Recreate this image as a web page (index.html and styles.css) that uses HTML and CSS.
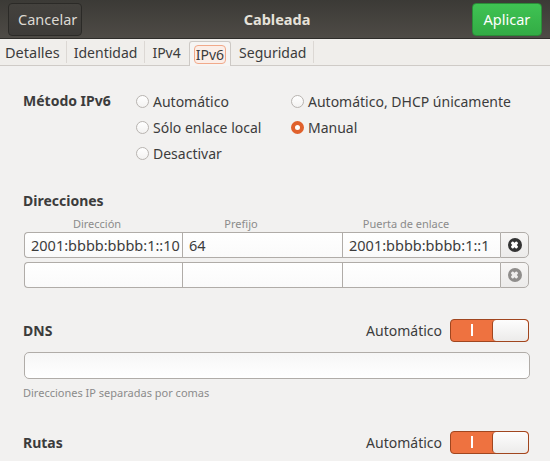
FILE: index.html
```html
<!DOCTYPE html>
<html lang="es">
<head>
<meta charset="utf-8">
<link rel="stylesheet" href="styles.css">
</head>
<body>
<div class="win">
  <header class="hb">
    <button class="btn cancel">Cancelar</button>
    <div class="title">Cableada</div>
    <button class="btn apply">Aplicar</button>
  </header>
  <nav class="tabs">
    <div class="tab">Detalles</div>
    <div class="sep"></div>
    <div class="tab">Identidad</div>
    <div class="sep"></div>
    <div class="tab">IPv4</div>
    <div class="tab active"><span class="focus">IPv6</span></div>
    <div class="tab">Seguridad</div>
    <div class="sep"></div>
  </nav>
  <main class="content">
    <div class="method">
      <div class="mlabel">Método IPv6</div>
      <div class="radios">
        <label class="radio"><span class="dot"></span>Automático</label>
        <label class="radio"><span class="dot"></span>Automático, DHCP únicamente</label>
        <label class="radio"><span class="dot"></span>Sólo enlace local</label>
        <label class="radio"><span class="dot on"></span>Manual</label>
        <label class="radio"><span class="dot"></span>Desactivar</label>
      </div>
    </div>

    <h3 class="heading dir">Direcciones</h3>
    <div class="cols">
      <span>Dirección</span><span>Prefijo</span><span>Puerta de enlace</span>
    </div>
    <div class="arow">
      <div class="f f1">2001:bbbb:bbbb:1::10</div>
      <div class="f f2">64</div>
      <div class="f f3">2001:bbbb:bbbb:1::1</div>
      <div class="xbtn"><span class="xi"></span></div>
    </div>
    <div class="arow">
      <div class="f f1"></div>
      <div class="f f2"></div>
      <div class="f f3"></div>
      <div class="xbtn"><span class="xi dis"></span></div>
    </div>

    <div class="srow dns">
      <h3 class="heading">DNS</h3>
      <div class="auto">Automático <span class="switch"><span class="on-part"><i></i></span><span class="knob"></span></span></div>
    </div>
    <div class="entry"></div>
    <div class="help">Direcciones IP separadas por comas</div>

    <div class="srow rutas">
      <h3 class="heading">Rutas</h3>
      <div class="auto">Automático <span class="switch"><span class="on-part"><i></i></span><span class="knob"></span></span></div>
    </div>
  </main>
</div>
</body>
</html>
```
FILE: styles.css
```css
* { box-sizing: border-box; }
html, body { margin: 0; padding: 0; }
body {
  width: 550px; height: 461px; overflow: hidden;
  background: #f2f1f0;
  font-family: "Noto Sans", "DejaVu Sans", sans-serif;
  font-size: 14px;
  color: #3c3c3c;
}
.win { width: 550px; height: 461px; }

.hb {
  height: 39px;
  display: flex; align-items: center; justify-content: space-between;
  padding: 0 8px;
  background: linear-gradient(#3b3a36, #4e4b46);
  border-bottom: 1px solid #2e2d2a;
}
.btn {
  height: 33px; border-radius: 4px;
  font-family: inherit; font-size: 14.5px;
  padding: 0 9px;
}
.cancel {
  width: 74px;
  background: linear-gradient(#44423e, #3d3b38);
  border: 1px solid #2b2a27;
  color: #dcd9d3;
}
.apply {
  width: 70px;
  background: linear-gradient(#3fc353, #33ac45);
  border: 1px solid #2a8c37;
  color: #ffffff;
}
.title { color: #e6e2da; font-weight: bold; font-size: 14.5px; }

.tabs {
  height: 27px;
  display: flex; align-items: stretch;
  border-bottom: 1px solid #cfcbc7;
  background: #f0eeeb;
}
.tab {
  display: flex; align-items: center;
  padding: 0 7px;
  color: #3c3c3c;
}
.tab:first-child { padding-left: 5px; padding-right: 6px; font-size: 14.5px; }
.sep { width: 1px; margin: 2px 0; background: #dcd8d4; }
.tab.active {
  margin: 2px 1px -1px 1px;
  padding: 0 4px;
  background: #f6f5f4;
  border: 1px solid #cdc9c5;
  border-bottom: none;
  border-radius: 3px 3px 0 0;
}
.focus {
  border: 1px solid #f1a98a;
  background: #fbeee8;
  border-radius: 4px;
  padding: 0 1px;
  line-height: 17px;
}

.content { padding: 0 21px 0 23px; }

.method { display: flex; margin-top: 22px; }
.mlabel { width: 113px; font-weight: bold; height: 26px; line-height: 26px; }
.radios { display: grid; grid-template-columns: 155px auto; grid-auto-rows: 26px; }
.radio { display: flex; align-items: center; }
.dot {
  width: 13px; height: 13px; border-radius: 50%;
  border: 1px solid #b8b4b0;
  background: linear-gradient(#ffffff, #f3f2f1);
  margin-right: 4px;
}
.dot.on {
  background: #ffffff;
  border: 4px solid #e0612c;
}

.heading { margin: 0; font-size: 14px; font-weight: bold; }
.dir { margin-top: 25px; height: 20px; line-height: 20px; }
.cols {
  display: grid; grid-template-columns: 146px 142px 188px;
  margin-left: 1px; height: 16px; line-height: 16px; margin-top: 5px;
  font-size: 11px; color: #8b8b8b; text-align: center;
}
.arow {
  display: flex; height: 26px; margin-left: 1px; margin-bottom: 4px; width: 505px;
}
.f {
  border: 1px solid #b0aca8;
  border-right: none;
  background: linear-gradient(#ffffff, #fafafa);
  padding-left: 6px; line-height: 24px; font-size: 14.5px;
  white-space: nowrap; overflow: hidden;
}
.f1 { width: 158px; border-radius: 4px 0 0 4px; }
.f2 { width: 160px; }
.f3 { width: 158px; }
.xbtn {
  width: 29px;
  border: 1px solid #b0aca8;
  border-radius: 0 5px 5px 0;
  background: linear-gradient(#f7f6f5, #ecebea);
  display: flex; align-items: center; justify-content: center;
}
.xi {
  width: 14px; height: 14px; border-radius: 50%;
  background: #333333; position: relative;
}
.xi.dis { background: #8f8d8b; }
.xi::before, .xi::after {
  content: ""; position: absolute; left: 5.5px; top: 3px; width: 3px; height: 8px;
  background: #fff; transform: rotate(45deg); border-radius: 1px;
}
.xi::after { transform: rotate(-45deg); }
.xi.dis::before, .xi.dis::after { background: #efeeed; }

.srow { display: flex; justify-content: space-between; align-items: center; height: 24px; }
.dns { margin-top: 30px; }
.rutas { margin-top: 30px; }
.auto { display: flex; align-items: center; gap: 8px; }
.switch {
  display: flex; width: 79px; height: 23px;
  border: 1px solid #a0461f; border-radius: 4px;
  background: #ee7240; overflow: hidden;
}
.on-part { width: 41px; display: flex; align-items: center; justify-content: center; }
.on-part i { width: 2px; height: 12px; background: #ffffff; }
.knob {
  flex: 1; background: linear-gradient(#fdfdfd, #ecebea);
  border-left: 1px solid #a0461f; border-radius: 4px;
}

.entry {
  margin-top: 10px; height: 27px; width: 506px; margin-left: 1px;
  border: 1px solid #b0aca8; border-radius: 5px;
  background: linear-gradient(#f6f6f6, #ffffff);
}
.help { font-size: 11px; color: #8b8b8b; margin-top: 7px; height: 14px; line-height: 14px; }
```
